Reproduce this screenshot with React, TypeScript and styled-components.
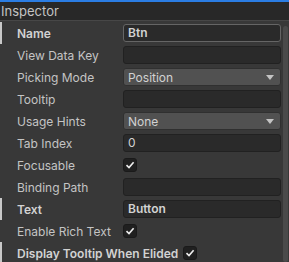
import * as React from 'react';
import styled, { createGlobalStyle } from 'styled-components';

const GlobalStyle = createGlobalStyle`
  html, body {
    margin: 0;
    padding: 0;
    background: #383838;
  }
  body {
    font-family: Inter, 'Noto Sans', sans-serif;
  }
`;

type FieldKind = 'text' | 'dropdown' | 'toggle';

interface PropRow {
  label: string;
  kind: FieldKind;
  value?: string;
  checked?: boolean;
  overridden?: boolean;
  focused?: boolean;
}

const rows: PropRow[] = [
  { label: 'Name', kind: 'text', value: 'Btn', overridden: true, focused: true },
  { label: 'View Data Key', kind: 'text', value: '' },
  { label: 'Picking Mode', kind: 'dropdown', value: 'Position' },
  { label: 'Tooltip', kind: 'text', value: '' },
  { label: 'Usage Hints', kind: 'dropdown', value: 'None' },
  { label: 'Tab Index', kind: 'text', value: '0' },
  { label: 'Focusable', kind: 'toggle', checked: true },
  { label: 'Binding Path', kind: 'text', value: '' },
  { label: 'Text', kind: 'text', value: 'Button', overridden: true },
  { label: 'Enable Rich Text', kind: 'toggle', checked: true },
  { label: 'Display Tooltip When Elided', kind: 'toggle', checked: true, overridden: true },
];

const CheckIcon = () => (
  <svg width='10' height='10' viewBox='0 0 10 10'>
    <path d='M1.5 5.2 L4 7.6 L8.6 2.2' fill='none' stroke='#eeeeee' strokeWidth='1.6' />
  </svg>
);

const App: React.FC = () => {
  return (
    <>
      <GlobalStyle />
      <Window>
        <TitleBar>Inspector</TitleBar>
        <Body>
          <Fields>
            {rows.map(row => (
              <Row key={row.label} $overridden={!!row.overridden}>
                <Label $bold={!!row.overridden} $grow={row.label.length > 20}>
                  {row.label}
                </Label>
                {row.kind === 'text' && (
                  <TextInput $focused={!!row.focused} $bold={!!row.overridden}>
                    {row.value}
                  </TextInput>
                )}
                {row.kind === 'dropdown' && (
                  <Dropdown>
                    <span>{row.value}</span>
                    <Arrow />
                  </Dropdown>
                )}
                {row.kind === 'toggle' && (
                  <Toggle>{row.checked && <CheckIcon />}</Toggle>
                )}
              </Row>
            ))}
          </Fields>
          <ScrollTrack>
            <ScrollThumb />
          </ScrollTrack>
        </Body>
      </Window>
    </>
  );
};

const Window = styled.div`
  width: 289px;
  height: 262px;
  overflow: hidden;
  display: flex;
  flex-direction: column;
  background: #383838;
  color: #c4c4c4;
  font-size: 12px;
`;

const TitleBar = styled.div`
  height: 18px;
  line-height: 18px;
  border-top: 2px solid #2b7de3;
  border-bottom: 1px solid #474747;
  background: #282828;
  padding-left: 1px;
  font-size: 13px;
  color: #c4c4c4;
  flex-shrink: 0;
`;

const Body = styled.div`
  flex: 1;
  display: flex;
  padding-top: 1px;
  min-height: 0;
`;

const Fields = styled.div`
  width: 282px;
  display: flex;
  flex-direction: column;
`;

const Row = styled.div<{ $overridden: boolean }>`
  height: 22px;
  flex-shrink: 0;
  display: flex;
  align-items: center;
  padding-left: 15px;
  padding-right: 1px;
  border-left: 2px solid ${p => (p.$overridden ? '#c8c8c8' : 'transparent')};
`;

const Label = styled.div<{ $bold: boolean; $grow: boolean }>`
  width: ${p => (p.$grow ? 'auto' : '106px')};
  flex-shrink: 0;
  padding-right: ${p => (p.$grow ? '5px' : '0')};
  font-weight: ${p => (p.$bold ? 600 : 400)};
  color: ${p => (p.$bold ? '#d2d2d2' : '#c4c4c4')};
  white-space: nowrap;
`;

const TextInput = styled.div<{ $focused: boolean; $bold: boolean }>`
  flex: 1;
  height: 16px;
  line-height: 16px;
  padding: 0 4px;
  background: #2a2a2a;
  border: 1px solid ${p => (p.$focused ? '#656565' : '#212121')};
  border-radius: 3px;
  font-weight: ${p => (p.$bold ? 600 : 400)};
  color: #d2d2d2;
`;

const Dropdown = styled.div`
  flex: 1;
  height: 16px;
  display: flex;
  align-items: center;
  justify-content: space-between;
  padding: 0 6px 0 4px;
  background: #515151;
  border: 1px solid #303030;
  border-radius: 3px;
  color: #d2d2d2;
`;

const Arrow = styled.div`
  width: 0;
  height: 0;
  border-left: 4px solid transparent;
  border-right: 4px solid transparent;
  border-top: 5px solid #c4c4c4;
`;

const Toggle = styled.div`
  width: 14px;
  height: 14px;
  box-sizing: border-box;
  display: flex;
  align-items: center;
  justify-content: center;
  background: #202020;
  border: 1px solid #1a1a1a;
  border-radius: 3px;
`;

const ScrollTrack = styled.div`
  width: 7px;
  display: flex;
  flex-direction: column;
  padding-top: 4px;
`;

const ScrollThumb = styled.div`
  width: 5px;
  height: 300px;
  margin-left: 1px;
  background: #4a4a4a;
  border-radius: 3px;
`;

export default App;
